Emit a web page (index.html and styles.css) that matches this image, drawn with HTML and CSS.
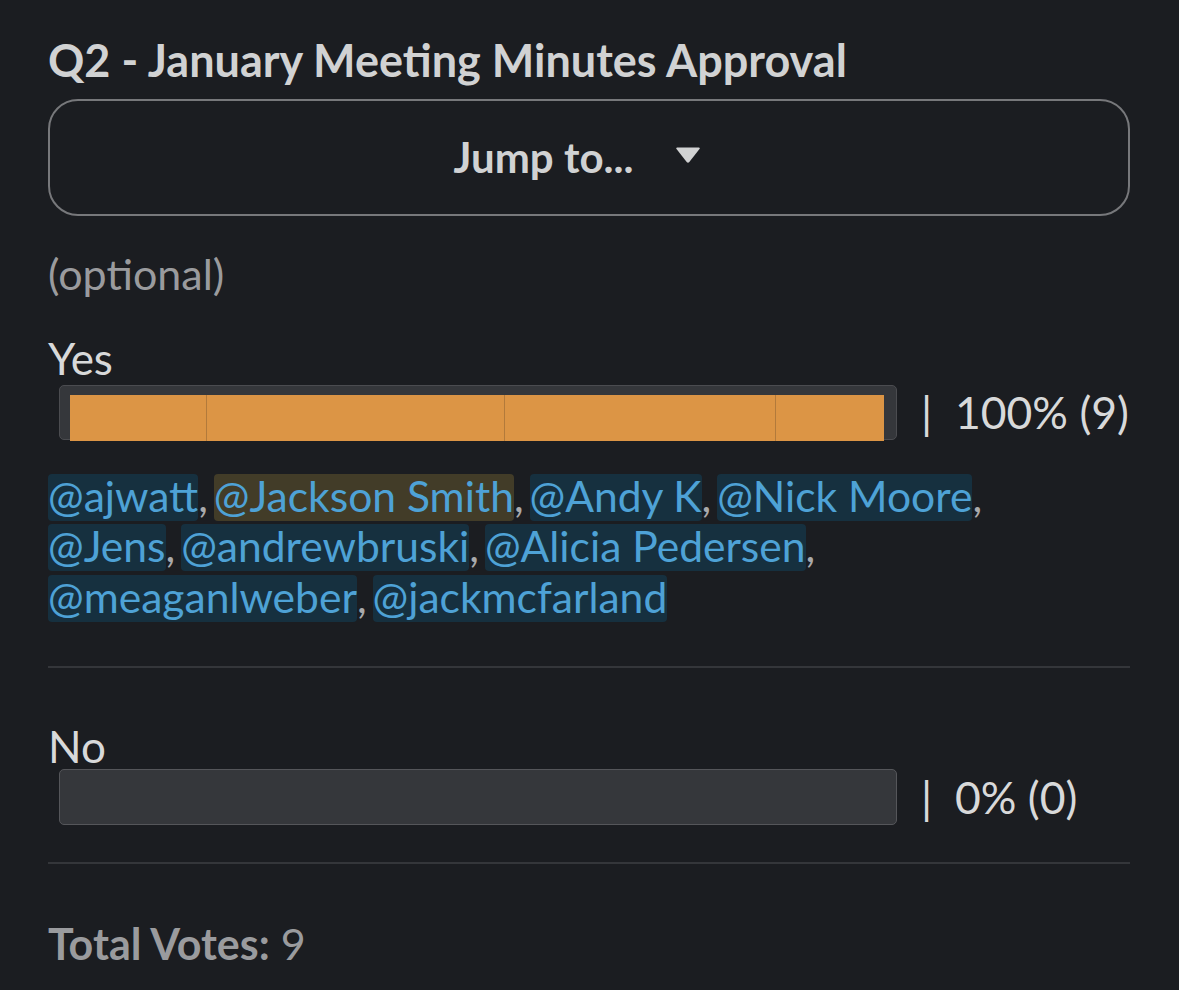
FILE: index.html
```html
<!DOCTYPE html>
<html>
<head>
<meta charset="utf-8">
<link rel="stylesheet" href="styles.css">
</head>
<body>
<div class="poll">
  <h1 class="title">Q2 - January Meeting Minutes Approval</h1>
  <div class="jump">
    <span class="jump-label">Jump to...</span>
    <svg class="caret" width="26" height="18" viewBox="0 0 26 18"><path d="M2.2 1.5 H23.8 Q25.6 1.5 24.5 3 L14.3 16 Q13 17.6 11.7 16 L1.5 3 Q0.4 1.5 2.2 1.5 Z" fill="#d1d2d3"/></svg>
  </div>
  <div class="optional">(optional)</div>

  <div class="option">
    <div class="opt-name">Yes</div>
    <div class="bar-row">
      <div class="bar">
        <div class="fill">
          <span class="seg" style="width:137px"></span>
          <span class="seg" style="width:298px"></span>
          <span class="seg" style="width:271px"></span>
          <span class="seg last"></span>
        </div>
      </div>
      <span class="result">| &nbsp;100% (9)</span>
    </div>
    <div class="voters">
      <span class="m">@ajwatt</span>, <span class="m self">@Jackson Smith</span>, <span class="m">@Andy K</span>, <span class="m">@Nick Moore</span>, <span class="m">@Jens</span>, <span class="m">@andrewbruski</span>, <span class="m">@Alicia Pedersen</span>, <span class="m">@meaganlweber</span>, <span class="m">@jackmcfarland</span>
    </div>
  </div>
  <hr class="sep">
  <div class="option no">
    <div class="opt-name">No</div>
    <div class="bar-row">
      <div class="bar empty"></div>
      <span class="result">| &nbsp;0% (0)</span>
    </div>
  </div>
  <hr class="sep sep2">
  <div class="total"><b>Total Votes:</b> 9</div>
</div>
</body>
</html>
```
FILE: styles.css
```css
html, body {
  margin: 0;
  padding: 0;
  background: #1b1d21;
}
body {
  font-family: Lato, "Noto Sans", sans-serif;
  font-size: 43px;
  line-height: 1.2;
  color: #d1d2d3;
}
.poll {
  width: 1082px;
  padding: 33px 0 0 48px;
}
.title {
  margin: 0;
  font-size: 45px;
  font-weight: 700;
  line-height: 1.2;
  color: #d1d2d3;
}
.jump {
  margin-top: 12px;
  height: 113px;
  border: 2px solid #77787b;
  border-radius: 30px;
  display: flex;
  align-items: center;
  justify-content: center;
  gap: 42px;
  padding-right: 23px;
}
.jump-label {
  font-size: 42px;
  font-weight: 700;
  color: #d1d2d3;
}
.caret {
  display: block;
  margin-top: -5px;
}
.optional {
  margin-top: 32px;
  color: #9a9b9e;
}
.option {
  margin-top: 32px;
}
.opt-name {
  font-size: 44px;
  line-height: 52px;
  color: #d8d9da;
}
.bar-row {
  display: flex;
  align-items: center;
  gap: 24px;
  margin-top: 1px;
}
.bar {
  margin-left: 11px;
  width: 836px;
  height: 53px;
  box-sizing: content-box;
  border: 1px solid #4b4c50;
  border-radius: 5px;
  background: #35373b;
  display: flex;
  padding: 0;
}
.bar .fill {
  display: flex;
  margin: 9px 12px -2px 10px;
  flex: 1;
  background: #dc9545;
}
.seg {
  display: block;
  height: 100%;
  border-right: 1px solid #b27a3b;
  box-sizing: border-box;
}
.seg.last {
  flex: 1;
  border-right: none;
}
.bar.empty {
  height: 54px;
  border-color: #55565a;
}
.result {
  font-size: 44.5px;
  color: #d8d9da;
  white-space: pre;
}
.voters {
  width: 1000px;
  margin-top: 31px;
  font-size: 42.6px;
  line-height: 50.5px;
  color: #a9aaac;
  word-spacing: -5px;
}
.m {
  display: inline-block;
  word-spacing: normal;
  line-height: 43px;
  padding: 0 0 4px;
  border-radius: 4px;
  background: #16303f;
  color: #4ea2d6;
}
.m.self {
  background: #423c28;
}
.sep {
  margin: 44px 0 0;
  border: 0;
  height: 2px;
  background: #34363a;
}
.option.no {
  margin-top: 52px;
}
.option.no .bar-row {
  margin-top: -3px;
}
.sep.sep2 {
  margin-top: 37px;
}
.total {
  margin-top: 54px;
  color: #9a9b9e;
}
.total b {
  font-weight: 700;
}
```
